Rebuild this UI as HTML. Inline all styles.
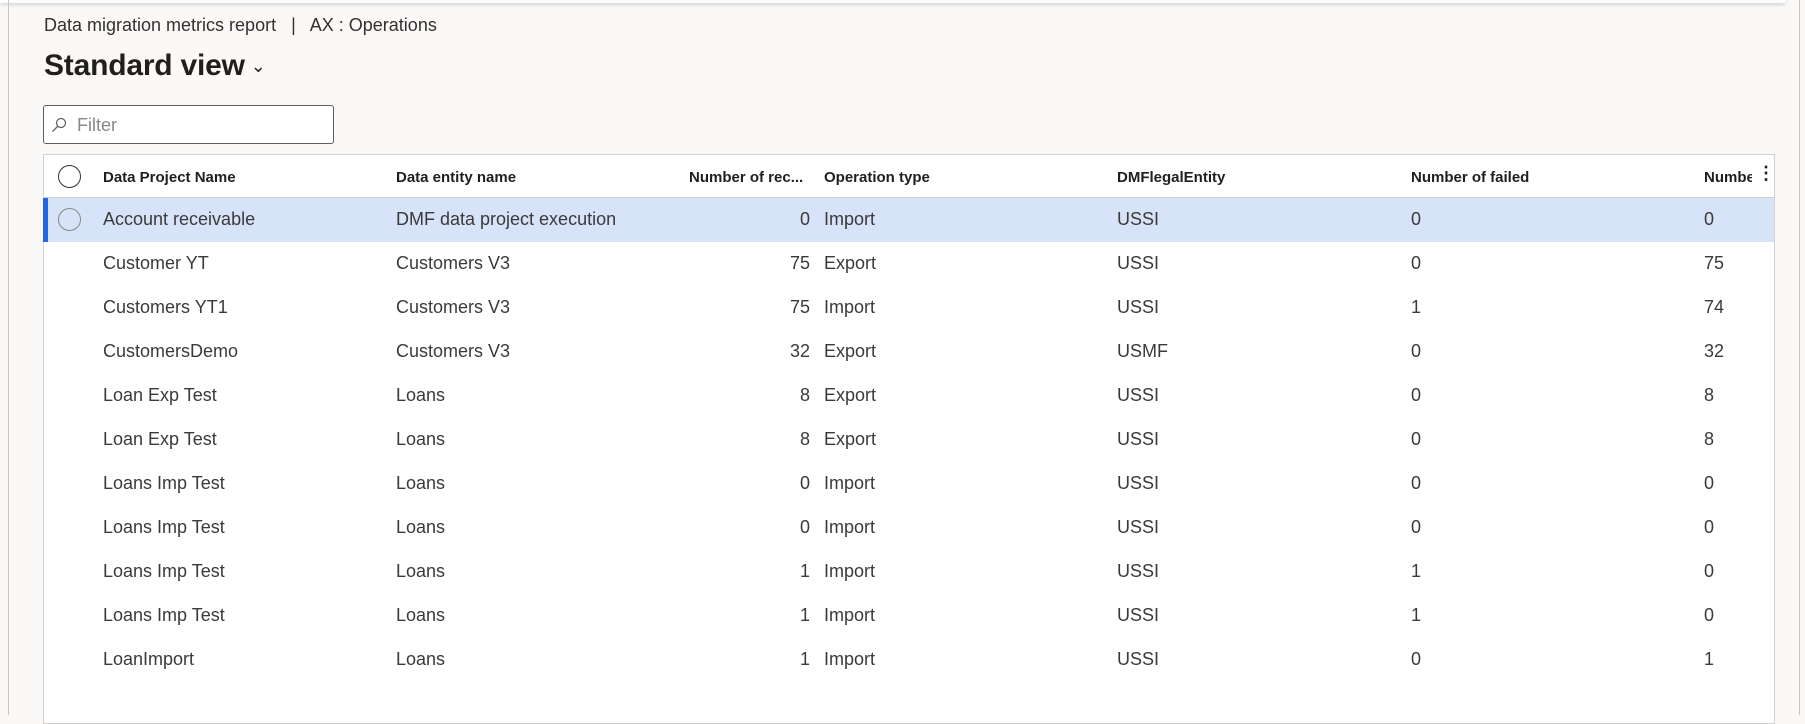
<!DOCTYPE html>
<html><head><meta charset="utf-8"><style>
*{margin:0;padding:0;box-sizing:border-box}
body{width:1805px;height:715px;overflow:hidden;background:#faf9f8;font-family:"Liberation Sans",sans-serif;position:relative;color:#323130}
.topbar{position:absolute;left:0;top:0;width:1785px;height:3px;background:#fff;box-shadow:0 1px 4px rgba(0,0,0,.25)}
.lline{position:absolute;left:8px;top:0;width:1px;height:715px;background:#c8c6c4}
.rline{position:absolute;left:1799px;top:0;width:1px;height:715px;background:#c8c6c4}
.crumb{position:absolute;left:44px;top:15px;font-size:18px;color:#323130;white-space:pre}
.title{position:absolute;left:44px;top:49px;font-size:30px;font-weight:bold;color:#201f1e;letter-spacing:-.2px}
.title span{font-weight:normal;font-size:18px;margin-left:6px;position:relative;top:-3px}
.filter{position:absolute;left:43px;top:105px;width:291px;height:39px;border:1px solid #605e5c;border-radius:3px;background:#fff}
.filter .t{position:absolute;left:33px;top:9px;font-size:18px;color:#8a8886}
.grid{position:absolute;left:43px;top:154px;width:1732px;height:570px;background:#fff;border:1px solid #d2d0ce}
.hdr{position:absolute;left:0;top:0;width:100%;height:43px;border-bottom:1px solid #d2d0ce}
.c{position:absolute;white-space:nowrap}
.h{font-size:15px;font-weight:bold;color:#201f1e;top:14px}
.row{position:absolute;left:0;width:100%;height:44px}
.row .c{font-size:18px;color:#3b3a39;top:11px}
.sel{background:#d7e3f8}
.sel:before{content:"";position:absolute;left:-1px;top:0;width:5px;height:44px;background:#2266e3}
.rad{position:absolute;left:14px;width:23px;height:23px;border:1.5px solid #605e5c;border-radius:50%}
.num{text-align:right;width:100px}
</style></head><body>
<div class="topbar"></div><div class="lline"></div><div class="rline"></div>
<div class="crumb">Data migration metrics report   |   AX : Operations</div>
<div class="title">Standard view<span>&#8964;</span></div>
<div class="filter"><svg style="position:absolute;left:7px;top:11px" width="16" height="16" viewBox="0 0 16 16"><circle cx="10" cy="6" r="4.5" fill="none" stroke="#605e5c" stroke-width="1.2"/><path d="M6.8 9.2L1.5 14.5" stroke="#605e5c" stroke-width="1.3"/></svg><div class="t">Filter</div></div>
<div class="grid">
<div class="hdr">
<div class="rad" style="top:10px;border-color:#323130"></div>
<div class="c h" style="left:59px">Data Project Name</div>
<div class="c h" style="left:352px">Data entity name</div>
<div class="c h" style="left:645px">Number of rec...</div>
<div class="c h" style="left:780px">Operation type</div>
<div class="c h" style="left:1073px">DMFlegalEntity</div>
<div class="c h" style="left:1367px">Number of failed</div>
<div class="c h" style="left:1660px;width:48px;overflow:hidden">Number</div>
<div class="c h" style="left:1713px;top:9px;font-size:18px;line-height:18px;font-weight:bold">&#8942;</div>
</div>
<div id="rows"></div>
</div>
<script>
var d=[["Account receivable","DMF data project execution","0","Import","USSI","0","0"],
["Customer YT","Customers V3","75","Export","USSI","0","75"],
["Customers YT1","Customers V3","75","Import","USSI","1","74"],
["CustomersDemo","Customers V3","32","Export","USMF","0","32"],
["Loan Exp Test","Loans","8","Export","USSI","0","8"],
["Loan Exp Test","Loans","8","Export","USSI","0","8"],
["Loans Imp Test","Loans","0","Import","USSI","0","0"],
["Loans Imp Test","Loans","0","Import","USSI","0","0"],
["Loans Imp Test","Loans","1","Import","USSI","1","0"],
["Loans Imp Test","Loans","1","Import","USSI","1","0"],
["LoanImport","Loans","1","Import","USSI","0","1"]];
var h="";d.forEach(function(r,i){h+='<div class="row'+(i==0?' sel':'')+'" style="top:'+(43+i*44)+'px">'+(i==0?'<div class="rad" style="top:10px;border-color:#8a8886"></div>':'')+
'<div class="c" style="left:59px">'+r[0]+'</div><div class="c" style="left:352px">'+r[1]+'</div><div class="c num" style="left:666px">'+r[2]+'</div><div class="c" style="left:780px">'+r[3]+'</div><div class="c" style="left:1073px">'+r[4]+'</div><div class="c" style="left:1367px">'+r[5]+'</div><div class="c" style="left:1660px">'+r[6]+'</div></div>'});
document.getElementById("rows").innerHTML=h;
</script>
</body></html>
